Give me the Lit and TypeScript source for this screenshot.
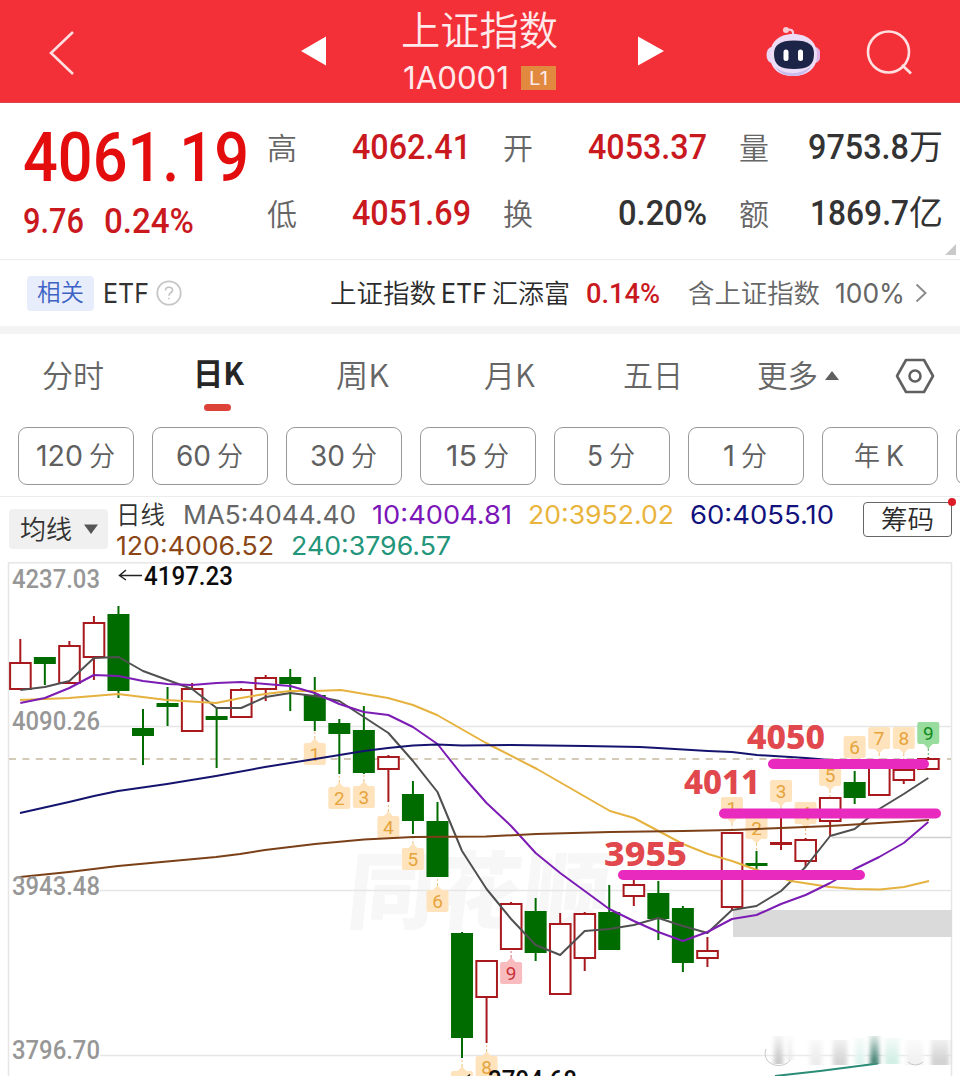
import { LitElement, html, svg, css } from "lit";
import { customElement } from "lit/decorators.js";

type Point = [number, number];
type Candle = ["r" | "g", number, number, number, number];

const STEP = 24.54;
const cx = (i: number) => 20.3 + i * STEP;

// direction, high, body top, body bottom, low
const candles: Candle[] = [
  ["r", 639, 662, 689, 689], ["g", 657, 657, 664, 685], ["r", 641, 645, 683, 683],
  ["r", 616, 622, 657, 680], ["g", 606, 614, 691, 698], ["g", 709, 728, 736, 765],
  ["g", 687, 703, 707, 726], ["r", 683, 688, 731, 731], ["g", 707, 716, 720, 768],
  ["r", 688, 689, 717, 717], ["r", 675, 677, 689, 701], ["g", 669, 677, 684, 711],
  ["g", 677, 695, 721, 731], ["g", 719, 723, 734, 774], ["g", 706, 730, 773, 774],
  ["r", 755, 756, 769, 802], ["g", 781, 794, 821, 834], ["g", 802, 821, 877, 877],
  ["g", 932, 933, 1038, 1058], ["r", 960, 960, 997, 1043], ["r", 902, 903, 949, 949],
  ["g", 898, 911, 953, 961], ["r", 913, 923, 994, 994], ["r", 912, 913, 958, 971],
  ["g", 885, 912, 950, 950], ["r", 880, 884, 896, 906], ["g", 881, 893, 919, 940],
  ["g", 906, 908, 963, 972], ["r", 937, 950, 958, 967], ["r", 832, 832, 907, 910],
  ["g", 851, 863, 866, 870], ["r", 815, 842, 845, 850], ["r", 838, 839, 861, 867],
  ["r", 797, 797, 821, 836], ["g", 771, 782, 798, 804], ["r", 765, 765, 795, 796],
  ["r", 767, 769, 780, 784], ["r", 757, 758, 769, 769],
];

const ma5 = [690, 687, 681, 658, 657, 671, 680, 689, 708, 708, 697, 693, 696, 701, 717, 733, 761, 792, 851, 889, 919, 945, 955, 931, 929, 925, 918, 926, 933, 910, 906, 891, 867, 836, 829, 809, 794, 778];
const ma10 = [703, 698, 688, 675, 676, 681, 684, 685, 683, 682, 684, 686, 693, 704, 712, 715, 727, 744, 775, 803, 826, 853, 873, 891, 909, 921, 932, 941, 932, 919, 915, 904, 895, 883, 869, 857, 843, 822];
const ma20: Point[] = [[20, 700], [69, 698], [118, 694], [167, 700], [216, 703], [241, 698], [265, 694], [290, 691], [315, 691], [341, 690], [388, 698], [413, 705], [437, 715], [486, 743], [537, 769], [610, 811], [634, 818], [683, 844], [708, 854], [732, 861], [757, 870], [791, 881], [830, 887], [855, 889], [880, 889.5], [904, 887], [929, 881]];
const ma60: Point[] = [[20, 813], [69, 802], [94, 796], [118, 791], [167, 784], [216, 776], [265, 767], [315, 759], [364, 751], [388, 748], [413, 745.5], [437, 744.5], [462, 745.5], [511, 745], [585, 746], [640, 747], [658, 748], [708, 751], [732, 752], [757, 755], [806, 758], [830, 760], [880, 762]];
const ma120: Point[] = [[20, 877], [69, 872], [118, 866], [216, 857], [240, 854], [265, 850], [290, 847], [315, 844], [364, 839.5], [413, 837], [486, 836.5], [536, 834], [610, 832], [683, 831], [732, 830], [781, 828], [830, 826], [879, 823], [929, 820]];

// label, candle index, centre y, side of the candle, tone
const marks: [string, number, number, "below" | "above", string][] = [
  ["1", 12, 754, "below", "y"], ["2", 13, 798, "below", "y"], ["3", 14, 797, "below", "y"],
  ["4", 15, 827, "below", "y"], ["5", 16, 859, "below", "y"], ["6", 17, 901, "below", "y"],
  ["7", 18, 1082, "below", "y"], ["8", 19, 1067, "below", "y"], ["9", 20, 973, "below", "p"],
  ["1", 29, 808, "above", "y"], ["2", 30, 828, "above", "y"], ["3", 31, 791, "above", "y"],
  ["4", 32, 813, "above", "y"], ["5", 33, 775, "above", "y"], ["6", 34, 747, "above", "y"],
  ["7", 35, 738, "above", "y"], ["8", 36, 738, "above", "y"], ["9", 37, 733, "above", "n"],
];

const toPoints = (p: Point[]) => p.map((q) => q.join(",")).join(" ");
const series = (v: number[]) => toPoints(v.map((y, i) => [cx(i), y] as Point));

/** One line of text set to an exact width. */
const fit = (text: string, w: number, size: number, cls = "", h = Math.round(size * 1.2)) => html`
  <svg class="fit ${cls}" width=${w} height=${h}>
    <text x="0" y=${h / 2 + size * 0.36} font-size=${size} textLength=${w} lengthAdjust="spacingAndGlyphs">${text}</text>
  </svg>`;

@customElement("app-root")
export class AppRoot extends LitElement {
  static styles = css`
    :host { display: block; width: 960px; height: 1076px; overflow: hidden; background: #fff;
      font-family: Inter, "Noto Sans CJK SC", sans-serif; color: #333; }
    * { box-sizing: border-box; }
    svg { display: block; flex: none; }
    .fit { overflow: visible; fill: currentColor; }
    .fit text, .chart text { white-space: pre; }
    .cjk { font-family: "Noto Sans CJK SC", sans-serif; font-weight: 400; }
    .light { font-weight: 350; }
    .din { font-family: Roboto, sans-serif; font-weight: 500; }
    .strong { font-weight: 700; }
    .red { color: #c9191e; }
    .grey { color: #666; }

    .header { height: 103px; background: #f32f38; border-bottom: 1px solid #d8474c; color: #ffe9ea;
      display: grid; grid-template-columns: 301px 25px 312px 26px 102px 54px 46px 48px; align-items: center; }
    .back { margin: 3px 0 0 48px; }
    .title { display: flex; flex-direction: column; align-items: center; gap: 9px; padding: 1px 5px 0 0; }
    .code { display: flex; align-items: center; gap: 12px; }
    .level { width: 35px; height: 24px; background: #e0893f; display: flex; align-items: center; justify-content: center; }
    .robot { grid-column: 6; }
    .search { grid-column: 8; margin-top: 3px; }

    .quote { height: 157px; padding: 0 0 0 23px; display: grid; grid-template-columns: 244px 204px 236px 236px;
      border-bottom: 1px solid #ececec; position: relative; }
    .quote > div:nth-child(n + 3) { margin-left: 32px; }
    .price { color: #e30d0e; padding-top: 18px; }
    .change { display: flex; gap: 20px; margin-top: 11px; color: #c9191e; }
    .cell { padding-top: 24px; display: flex; flex-direction: column; gap: 24px; }
    .pair { height: 42px; display: flex; align-items: center; justify-content: space-between; }
    .pair > :last-child { margin-bottom: 4px; }
    .unit { display: flex; align-items: center; }
    .corner { position: absolute; right: 4px; bottom: 4px; }

    .etf { height: 66px; padding: 0 33px 0 27px; display: flex; align-items: center; }
    .tag { width: 67px; height: 35px; border-radius: 4px; background: #e8edfc; color: #3c62c4;
      display: flex; align-items: center; justify-content: center; margin-right: 9px; }
    .help { margin-left: 7px; margin-right: auto; }
    .fund { color: #2b2b2b; margin-right: 16px; display: flex; gap: 5px; align-items: center; }
    .gain { margin-right: 28px; display: flex; }
    .holding { display: flex; align-items: center; gap: 15px; color: #666; margin-right: 10px; }
    .band { height: 8px; background: #f4f4f4; }

    .tabs { height: 85px; padding-left: 42px; display: grid; color: #666;
      grid-template-columns: 151px 143px 148px 139px 134px 138px 40px; }
    .tab { height: 83px; display: flex; align-items: center; gap: 7px; }
    .active { color: #262626; flex-direction: column; align-items: flex-start; gap: 12px; padding-top: 21px; }
    .bar { width: 27px; height: 7px; border-radius: 4px; background: #dd4238; margin-left: 11px; }

    .periods { height: 78px; padding: 8px 0 0 18px; display: flex; gap: 18px; overflow: hidden; border-bottom: 1px solid #ececec; }
    .period { flex: none; width: 116px; height: 58px; border: 1.5px solid #999; border-radius: 9px;
      display: flex; align-items: center; justify-content: center; gap: 6px; color: #606060; padding-right: 2px; }

    .averages { height: 65px; padding: 3px 8px 0 9px; display: flex; align-items: flex-start; }
    .select { width: 99px; height: 40px; margin-top: 9px; border-radius: 4px; background: #f0f0f0; color: #333;
      display: flex; align-items: center; justify-content: center; gap: 12px; }
    .legend { margin-left: 8px; width: 747px; margin-top: -1px; }
    .line { height: 31px; display: flex; align-items: center; }
    .line + .line { gap: 17px; }
    .m5 { color: #666; margin-left: 18px; } .m10 { color: #7a16b8; margin-left: 16px; }
    .m20 { color: #e9b43c; margin-left: 16px; } .m60 { color: #12127c; margin-left: 16px; }
    .m120 { color: #8a4616; } .m240 { color: #23957a; }
    .chips { position: relative; width: 89px; height: 35px; margin-top: 2px; border: 1.5px solid #666; border-radius: 4px;
      display: flex; align-items: center; justify-content: center; color: #2b2b2b; }
    .dot { position: absolute; right: -5px; top: -5px; width: 8px; height: 8px; border-radius: 50%; background: #dc1d25; }

    .grid { stroke: #e6e6e6; stroke-width: 1.6; fill: none; }
    .ma { fill: none; stroke-width: 2; stroke-linejoin: round; }
    .axis { font: 500 25px Roboto, sans-serif; fill: #979797; }
    .peak { font: 500 25px Roboto, sans-serif; fill: #0c0c0c; }
    .note { font: 800 34px "Noto Sans", "Open Sans", sans-serif; fill: #e0484d; }
    .marker { fill: none; stroke: #e82abf; stroke-width: 10; stroke-linecap: round; }
    .badge { font: 400 19px Roboto, sans-serif; text-anchor: middle; }
    .brand { font: 900 84px "Noto Sans CJK SC", sans-serif; fill: #f7f7f7; }
  `;

  private badge([label, i, y, side, tone]: (typeof marks)[number]) {
    const x = cx(i);
    const fill = tone === "y" ? "#fee3bd" : tone === "p" ? "#f8bcbf" : "#98dd9d";
    const ink = tone === "y" ? "#e6a43c" : tone === "p" ? "#c93138" : "#128a1c";
    const d = side === "below" ? -1 : 1;
    return svg`
      <line x1=${x} x2=${x} y1=${y + d * 14} y2=${y + d * 22} stroke=${ink} stroke-width="1" stroke-dasharray="4 2" opacity=".7"></line>
      <rect x=${x - 11} y=${y - 11} width="22" height="22" rx="2" fill=${fill}></rect>
      <path d="M${x - 5} ${y + d * 10.5}L${x} ${y + d * 15.5}L${x + 5} ${y + d * 10.5}Z" fill=${fill}></path>
      <text class="badge" x=${x} y=${y + 7} fill=${ink}>${label}</text>`;
  }

  private candle([kind, high, top, bottom, low]: Candle, i: number) {
    const x = cx(i);
    if (kind === "g" || bottom - top < 4) {
      const c = kind === "g" ? "#006c00" : "#a8191d";
      return svg`<line x1=${x} x2=${x} y1=${high} y2=${low} stroke=${c} stroke-width="2"></line>
        <rect x=${x - 11} y=${top} width="22" height=${bottom - top} fill=${c}></rect>`;
    }
    return svg`<path d="M${x} ${high}V${top}M${x} ${bottom}V${low}" stroke="#a8191d" stroke-width="2"></path>
      <rect x=${x - 10.2} y=${top + 1} width="20.6" height=${bottom - top - 1} fill="#fff" stroke="#a8191d" stroke-width="2"></rect>`;
  }

  private chart() {
    return html`<svg class="chart" width="960" height="514" viewBox="0 562 960 514">
      <defs>
        <linearGradient id="fade" x1="0" y1="0" x2="0" y2="1">
          <stop offset="0" stop-color="#fff"></stop><stop offset="1" stop-color="#fff" stop-opacity="0"></stop>
        </linearGradient>
        <filter id="soft"><feGaussianBlur stdDeviation="2 0.4"></feGaussianBlur></filter>
      </defs>
      <text class="brand" x="346" y="922" textLength="262" lengthAdjust="spacingAndGlyphs" transform="skewX(-6) translate(96 0)">同花顺</text>
      <path class="grid" d="M8.5 1076V562.8H951.5V1076M100 726.5H951M100 890.5H951M100 1055.5H951"></path>
      <path d="M832 837.5H951" stroke="#cfcfcf" stroke-width="1.5"></path>
      <path d="M9 759H951" stroke="#c5b9a1" stroke-width="1.3" stroke-dasharray="7 6.4"></path>
      <rect x="733" y="910" width="219" height="27" fill="#dadada"></rect>
      ${marks.map((m) => this.badge(m))}
      ${candles.map((c, i) => this.candle(c, i))}
      <polyline class="ma" stroke="#505050" points=${series(ma5)}></polyline>
      <polyline class="ma" stroke="#e6b23f" points=${toPoints(ma20)}></polyline>
      <polyline class="ma" stroke="#7c1cb4" points=${series(ma10)}></polyline>
      <polyline class="ma" stroke="#14146e" points=${toPoints(ma60)}></polyline>
      <polyline class="ma" stroke="#7b4018" points=${toPoints(ma120)}></polyline>

      <text class="axis" x="12" y="587.5" textLength="88" lengthAdjust="spacingAndGlyphs">4237.03</text>
      <text class="axis" x="12" y="730" textLength="88" lengthAdjust="spacingAndGlyphs">4090.26</text>
      <text class="axis" x="12" y="895" textLength="88" lengthAdjust="spacingAndGlyphs">3943.48</text>
      <text class="axis" x="12" y="1059" textLength="88" lengthAdjust="spacingAndGlyphs">3796.70</text>
      <path d="M142 575.5H120M126 570L119.5 575.5L126 580" fill="none" stroke="#222" stroke-width="1.5"></path>
      <text class="peak" x="144" y="585" textLength="89" lengthAdjust="spacingAndGlyphs">4197.23</text>
      <path d="M486 1080H464M470 1074.5L463.5 1080" fill="none" stroke="#222" stroke-width="1.5"></path>
      <text class="peak" x="488" y="1089" textLength="89" lengthAdjust="spacingAndGlyphs">3794.68</text>

      <path class="marker" d="M773 764H924M724 813.5H936M623 875H860"></path>
      <text class="note" x="747" y="749" textLength="78" lengthAdjust="spacingAndGlyphs">4050</text>
      <text class="note" x="684" y="793.5" textLength="76" lengthAdjust="spacingAndGlyphs">4011</text>
      <text class="note" x="604" y="866" textLength="83" lengthAdjust="spacingAndGlyphs">3955</text>

      <polyline points="775,1076 820,1071 878,1063.5" fill="none" stroke="#2a8c76" stroke-width="2"></polyline>
      <g filter="url(#soft)">
        <rect x="774" y="1036" width="9" height="28" fill="#c9c9c9"></rect>
        <rect x="788" y="1036" width="4" height="24" fill="#e3e3e3"></rect>
        <rect x="810" y="1040" width="12" height="25" fill="#ededed"></rect>
        <rect x="833" y="1040" width="14" height="25" fill="#d6d6d6"></rect>
        <rect x="855" y="1038" width="10" height="26" fill="#e0f3ee"></rect>
        <rect x="870" y="1036" width="9" height="28" fill="#4d8878"></rect>
        <rect x="885" y="1038" width="14" height="26" fill="#d3efe6"></rect>
        <rect x="906" y="1040" width="17" height="25" fill="#f1f1f1"></rect>
        <rect x="931" y="1040" width="18" height="25" fill="#d3d3d3"></rect>
      </g>
      <rect x="762" y="1030" width="188" height="30" fill="url(#fade)"></rect>
      <path d="M766 1049C763 1057 768 1065 778 1065.5C785 1065.500 788 1063 790 1060M908 1062Q915 1068 923 1062" fill="none" stroke="#c8c8c8" stroke-width="1"></path>
    </svg>`;
  }

  private pair(label: string, value: unknown) {
    return html`<div class="pair">${fit(label, 30, 30, "cjk light grey")}${value}</div>`;
  }

  render() {
    const p = (a: string, w: number, b = "分") => html`<div class="period">${fit(a, w, 28.5)}${fit(b, 26, 27, "cjk light")}</div>`;
    return html`
      <div class="header">
        <svg class="back" width="28" height="46" viewBox="48 30 28 46"><path d="M73 32L51 53L73 74" fill="none" stroke="#ffdfe0" stroke-width="2.6"></path></svg>
        <svg width="25" height="30"><path d="M0 15L25 .5V29.500Z" fill="#fff"></path></svg>
        <div class="title">
          ${fit("上证指数", 157, 39.5, "cjk light", 44)}
          <div class="code">${fit("1A0001", 106, 30.5, "", 32)}<div class="level">${fit("L1", 19, 19, "")}</div></div>
        </div>
        <svg width="26" height="30"><path d="M26 15L0 .5V29.500Z" fill="#fff"></path></svg>
        <svg class="robot" width="54" height="52" viewBox="765 25 54 52">
          <path d="M785 30Q793 28 792 35" fill="none" stroke="#f7c9dc" stroke-width="2.2"></path>
          <circle cx="785" cy="30" r="3" fill="#f9cbd5"></circle>
          <ellipse cx="771" cy="55" rx="5.500" ry="8" fill="#e9d6f2"></ellipse><ellipse cx="814" cy="55" rx="5.500" ry="8" fill="#dcb5e6"></ellipse>
          <path d="M792 34C808 34 816 43 816 55C816 69 806 76 792 76C778 76 769 69 769 55C769 43 777 34 792 34Z" fill="#eddcf5"></path>
          <path d="M774 67Q792 80 811 66Q804 76 792 76Q780 76 774 67Z" fill="#c9bdf0"></path>
          <path d="M793 40.500C808 40.500 813 45 813 54C813 65 807 69 793 69C779 69 773 65 773 54C773 45 779 40.500 793 40.500Z" fill="#1c2548"></path>
          <rect x="782.500" y="49.500" width="5" height="11.500" rx="2.500" fill="#fff"></rect><rect x="797" y="49.500" width="5" height="11.500" rx="2.500" fill="#fff"></rect>
        </svg>
        <svg class="search" width="48" height="48" viewBox="865 29 48 48"><circle cx="887.500" cy="52" r="20.500" fill="none" stroke="#ffdfe0" stroke-width="2.600"></circle><path d="M901 65L910 73.500" stroke="#ffdfe0" stroke-width="2.800"></path></svg>
      </div>

      <div class="quote">
        <div>
          <div class="price">${fit("4061.19", 226, 69, "din", 70)}</div>
          <div class="change">${fit("9.76", 61, 34.5, "din", 38)}${fit("0.24%", 90, 34.5, "din", 38)}</div>
        </div>
        <div class="cell">${this.pair("高", fit("4062.41", 119, 35, "din red"))}${this.pair("低", fit("4051.69", 119, 35, "din red"))}</div>
        <div class="cell">${this.pair("开", fit("4053.37", 119, 35, "din red"))}${this.pair("换", fit("0.20%", 89, 35, "din"))}</div>
        <div class="cell">
          ${this.pair("量", html`<div class="unit">${fit("9753.8", 101, 35, "din")}${fit("万", 34, 34, "cjk")}</div>`)}
          ${this.pair("额", html`<div class="unit">${fit("1869.7", 99, 35, "din")}${fit("亿", 34, 34, "cjk")}</div>`)}
        </div>
        <svg class="corner" width="11" height="11"><path d="M11 0V11H0Z" fill="#c9c9c9"></path></svg>
      </div>

      <div class="etf">
        <div class="tag">${fit("相关", 47, 23.5, "cjk light")}</div>
        ${fit("ETF", 46, 26.5)}
        <svg class="help" width="26" height="26" viewBox="0 0 26 26"><circle cx="13" cy="13" r="11.700" fill="none" stroke="#c6c6c6" stroke-width="1.800"></circle><path d="M9.500 10.500Q9.500 7.300 13 7.300Q16.500 7.300 16.500 10.300Q16.500 12 14.500 13Q13 13.900 13 15.800M13 17.700V19.200" fill="none" stroke="#c2c2c2" stroke-width="1.600"></path></svg>
        <div class="fund">${fit("上证指数", 106, 26, "cjk light")}${fit("ETF", 46, 26.5)}${fit("汇添富", 78, 26, "cjk light")}</div>
        <div class="gain">${fit("0.14%", 74, 28.5, "din red")}</div>
        <div class="holding">${fit("含上证指数", 132, 26, "cjk light")}${fit("100%", 70, 26.5)}</div>
        <svg width="12" height="20"><path d="M1.500 1.500L10.500 10L1.500 18.500" fill="none" stroke="#8c8c8c" stroke-width="2"></path></svg>
      </div>
      <div class="band"></div>

      <div class="tabs">
        <div class="tab">${fit("分时", 62, 31, "cjk light")}</div>
        <div class="tab active">${fit("日K", 51, 31, "cjk strong")}<div class="bar"></div></div>
        <div class="tab">${fit("周K", 53, 31, "cjk light")}</div>
        <div class="tab">${fit("月K", 51, 31, "cjk light")}</div>
        <div class="tab">${fit("五日", 60, 31, "cjk light")}</div>
        <div class="tab">${fit("更多", 61, 31, "cjk light")}<svg width="14" height="10"><path d="M7 0L14 9H0Z" fill="#606060"></path></svg></div>
        <div class="tab"><svg width="40" height="36" viewBox="0 0 40 36"><path d="M11 2H29L38 18L29 34H11L2 18Z" fill="none" stroke="#606060" stroke-width="2.600" stroke-linejoin="round"></path><circle cx="20" cy="18" r="5.500" fill="none" stroke="#606060" stroke-width="2.600"></circle></svg></div>
      </div>

      <div class="periods">
        ${p("120", 47)}${p("60", 35)}${p("30", 35)}${p("15", 31)}${p("5", 16)}${p("1", 12)}
        <div class="period">${fit("年", 26, 27, "cjk light")}${fit("K", 18, 28)}</div>
        <div class="period"></div>
      </div>

      <div class="averages">
        <div class="select">${fit("均线", 52, 26, "cjk light")}<svg width="14" height="11"><path d="M0 .5H14L7 10Z" fill="#555"></path></svg></div>
        <div class="legend">
          <div class="line">${fit("日线", 49, 25, "cjk light")}${fit("MA5:4044.40", 173, 26, "m5")}${fit("10:4004.81", 140, 26, "m10")}${fit("20:3952.02", 146, 26, "m20")}${fit("60:4055.10", 144, 26, "m60")}</div>
          <div class="line">${fit("120:4006.52", 158, 26, "m120")}${fit("240:3796.57", 160, 26, "m240")}</div>
        </div>
        <div class="chips">${fit("筹码", 53, 26, "cjk light")}<span class="dot"></span></div>
      </div>
      ${this.chart()}
    `;
  }
}
